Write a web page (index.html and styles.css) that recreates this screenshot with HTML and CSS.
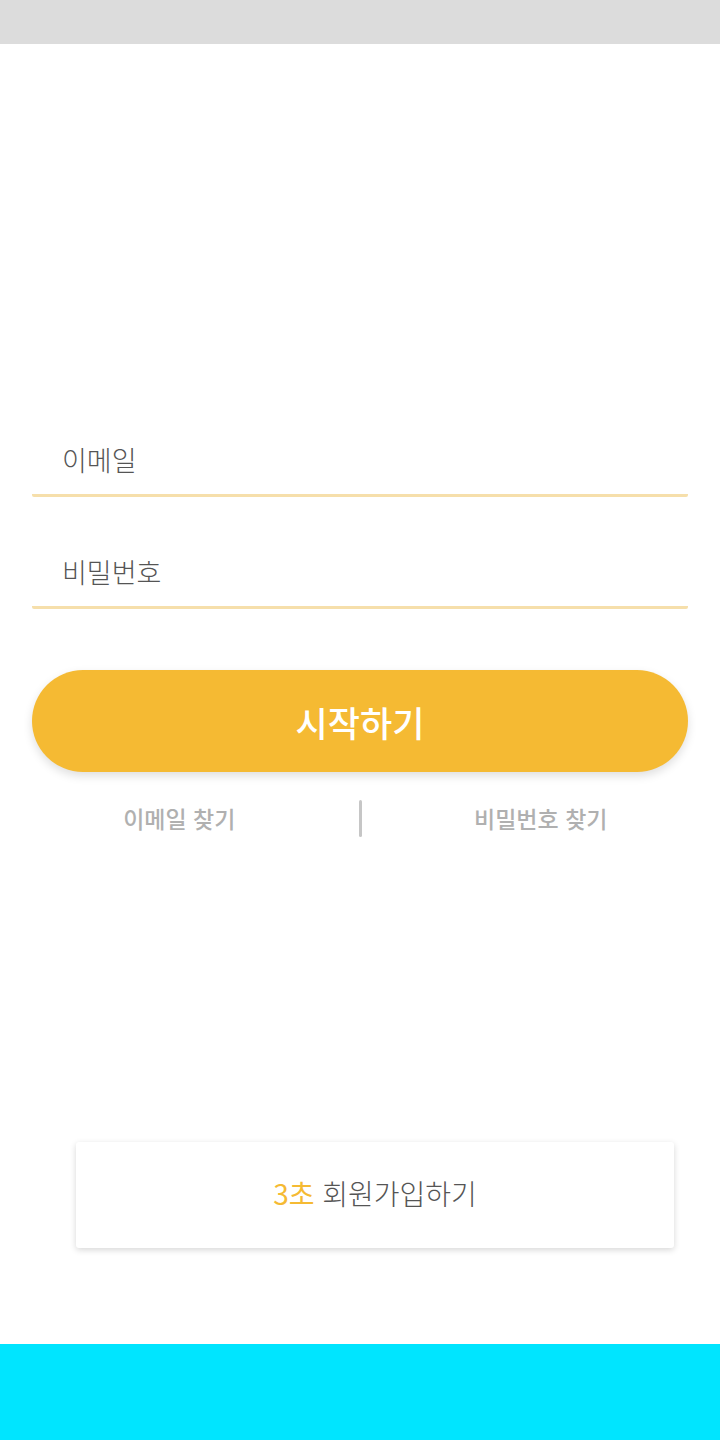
FILE: index.html
```html
<!DOCTYPE html>
<html lang="ko">
<head>
<meta charset="utf-8">
<title>로그인</title>
<link rel="stylesheet" href="styles.css">
</head>
<body>
<div class="app">
  <div class="status-bar"></div>
  <main class="main">
    <form class="login-form">
      <div class="field"><span class="field-label">이메일</span></div>
      <div class="field field-second"><span class="field-label">비밀번호</span></div>
      <button type="button" class="start-btn">시작하기</button>
    </form>
    <div class="find-row">
      <a class="find-link">이메일 찾기</a>
      <span class="find-divider"></span>
      <a class="find-link">비밀번호 찾기</a>
    </div>
    <div class="signup-card">
      <span class="signup-accent">3초</span>&nbsp;<span class="signup-text">회원가입하기</span>
    </div>
  </main>
  <div class="bottom-bar"></div>
</div>
</body>
</html>
```

FILE: styles.css
```css
* { box-sizing: border-box; }
html, body {
  margin: 0;
  padding: 0;
  background: #ffffff;
  font-family: "Noto Sans CJK KR", "Noto Sans", sans-serif;
}
.app {
  width: 720px;
  height: 1440px;
  display: flex;
  flex-direction: column;
}
.status-bar {
  height: 44px;
  background: #dcdcdc;
  flex: none;
}
.main {
  flex: 1;
  display: flex;
  flex-direction: column;
}
.login-form {
  margin: 396px 32px 0 32px;
  display: flex;
  flex-direction: column;
}
.field {
  height: 57px;
  padding-left: 30px;
  border-bottom: 3px solid #f6dfab;
  border-radius: 2px;
  display: flex;
  align-items: flex-start;
}
.field-second {
  margin-top: 55px;
}
.field-label {
  font-size: 27px;
  font-weight: 300;
  line-height: 40px;
  color: #555555;
}
.start-btn {
  margin-top: 61px;
  height: 102px;
  border: none;
  border-radius: 51px;
  background: #f5ba33;
  color: #ffffff;
  font-family: inherit;
  font-size: 35px;
  font-weight: 500;
  box-shadow: 0 4px 10px rgba(0, 0, 0, 0.13);
  padding: 0;
}
.find-row {
  margin-top: 28px;
  height: 37px;
  display: flex;
  align-items: center;
}
.find-link {
  flex: 1;
  text-align: center;
  font-size: 23px;
  font-weight: 500;
  color: #b0b0b0;
  line-height: 37px;
}
.find-divider {
  width: 3px;
  height: 37px;
  background: #c6c6c6;
  border-radius: 2px;
  flex: none;
}
.signup-card {
  margin: auto 0 96px 76px;
  width: 598px;
  height: 106px;
  padding-bottom: 4px;
  background: #ffffff;
  border-radius: 3px;
  box-shadow: 0 2px 6px rgba(0, 0, 0, 0.16);
  display: flex;
  align-items: center;
  justify-content: center;
  font-size: 28px;
  font-weight: 300;
}
.signup-accent { color: #f5ba33; font-weight: 400; }
.signup-text { color: #555555; }
.bottom-bar {
  height: 96px;
  background: #00e5ff;
  flex: none;
}
```
